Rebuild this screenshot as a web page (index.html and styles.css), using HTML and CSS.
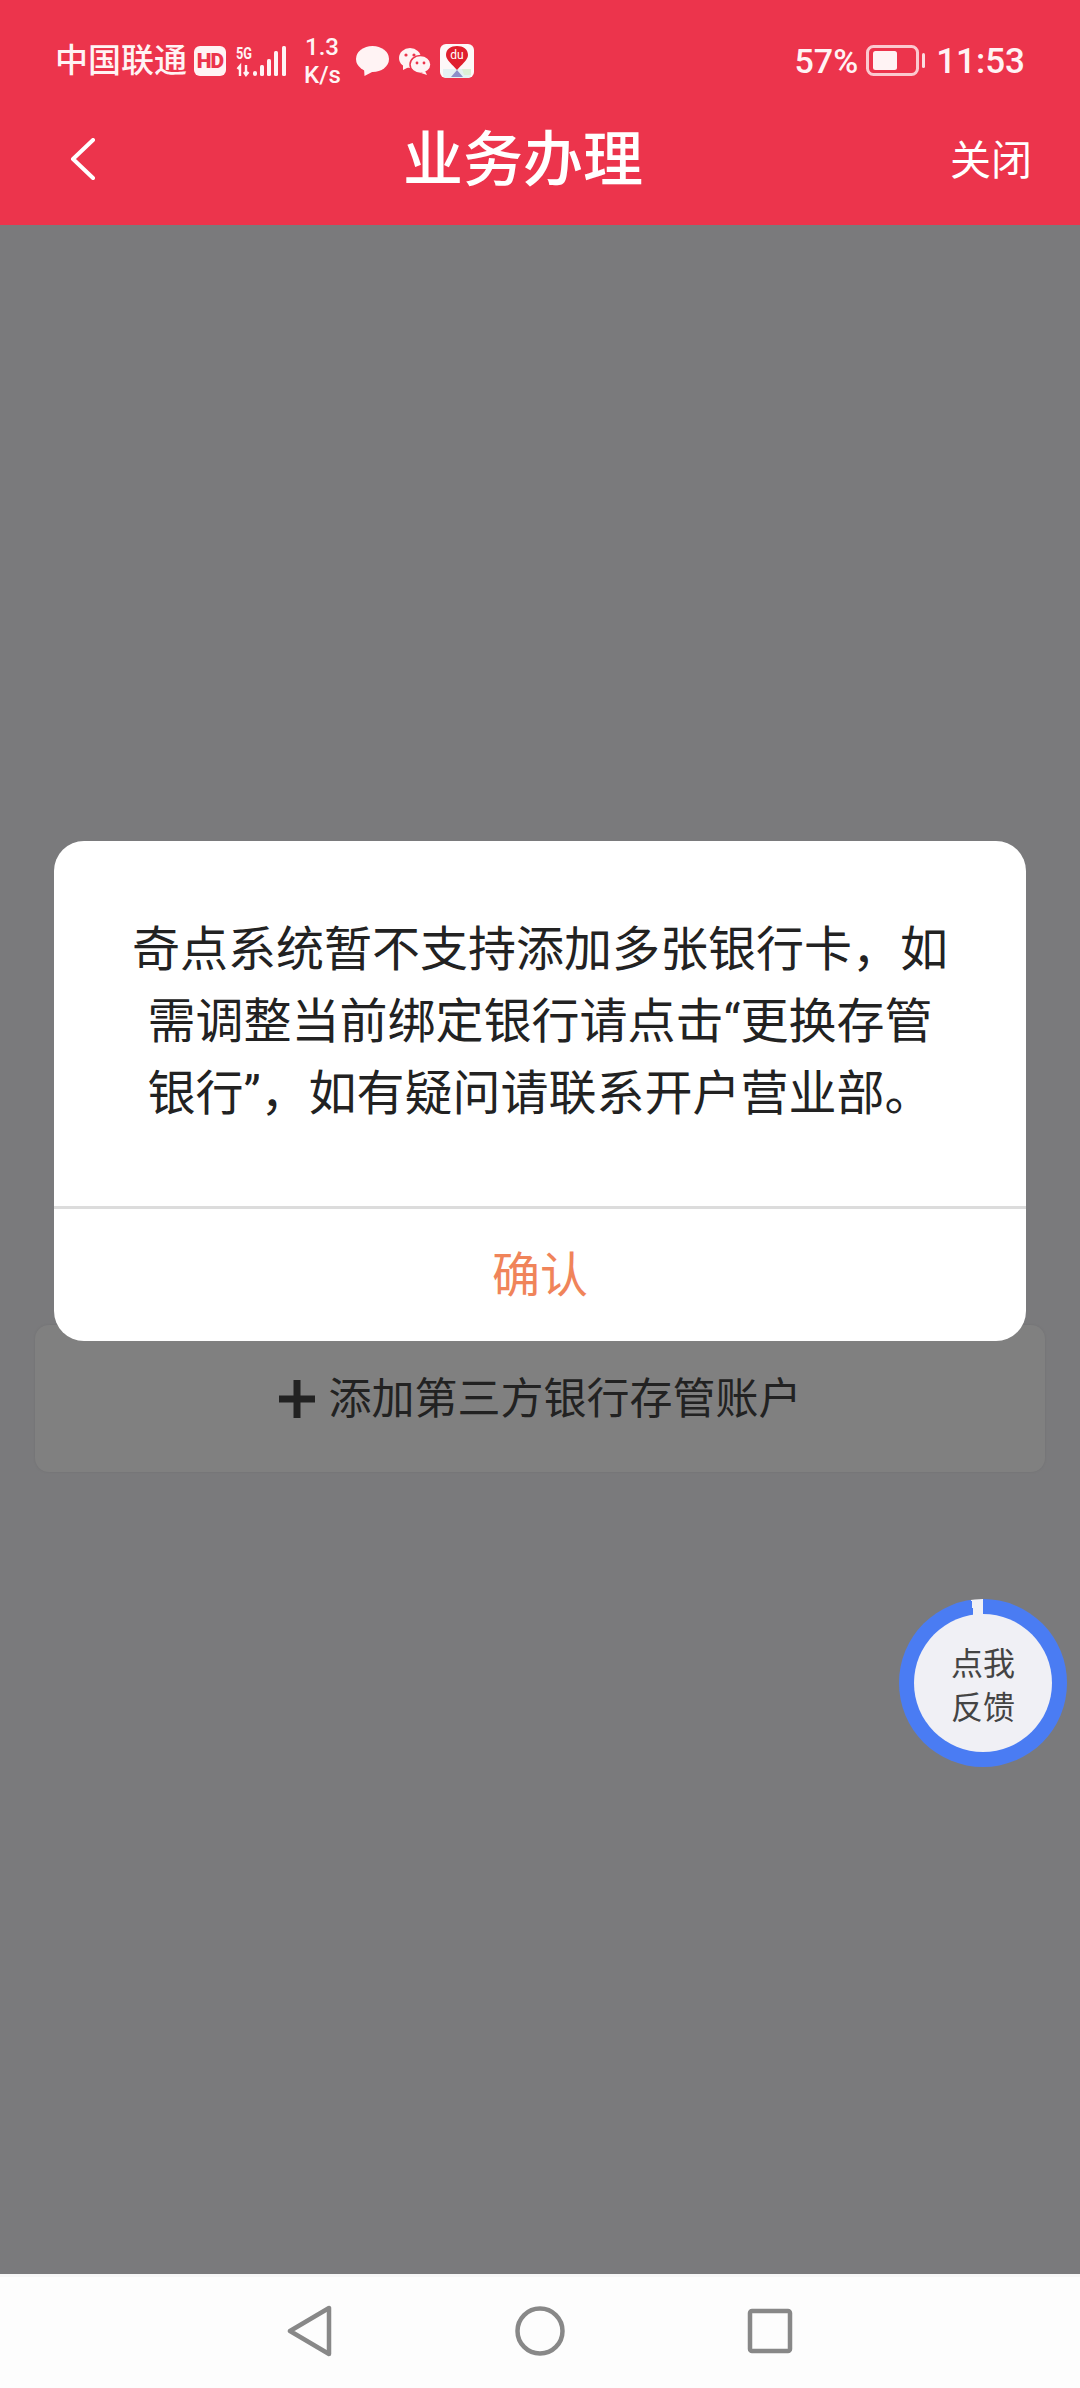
FILE: index.html
```html
<!DOCTYPE html>
<html lang="zh-CN">
<head>
    <meta charset="UTF-8">
    <meta name="viewport" content="width=device-width, initial-scale=1.0">
    <title>业务办理</title>
    <link rel="stylesheet" href="styles.css">
</head>
<body>
    <div class="page">
        <header class="top">
            <div class="status">
                <span class="carrier">中国联通</span>
                <span class="hd">HD</span>
                <svg class="signal" width="50" height="32" viewBox="0 0 50 32">
                    <text x="0" y="14" class="signal-5g" textLength="16" lengthAdjust="spacingAndGlyphs">5G</text>
                    <path d="M4 31V21M1.5 24L4 21L4 31M10 20V30M8 27L10 30L12.5 27" fill="none" stroke="#fff3f4" stroke-width="2.4"/>
                    <rect x="17" y="26" width="4" height="5" rx="2" fill="#fff3f4"/>
                    <rect x="24" y="20" width="4" height="11" rx="1.5" fill="#fff3f4"/>
                    <rect x="31" y="14" width="4" height="17" rx="1.5" fill="#fff3f4"/>
                    <rect x="38" y="6" width="4" height="25" rx="1.5" fill="#fff3f4"/>
                    <rect x="46" y="1" width="4" height="30" rx="1.5" fill="#fff3f4"/>
                </svg>
                <span class="speed">1.3<br>K/s</span>
                <svg class="bubble" width="33" height="30" viewBox="0 0 33 30">
                    <ellipse cx="16.500" cy="13" rx="16.500" ry="13" fill="#fff3f4"/>
                    <path d="M8 22L8.500 30L18 25Z" fill="#fff3f4"/>
                </svg>
                <svg class="wechat" width="32" height="27" viewBox="0 0 32 27">
                    <ellipse cx="11" cy="10" rx="11" ry="10" fill="#fff3f4"/>
                    <path d="M4 16L4 22L10 19Z" fill="#fff3f4"/>
                    <ellipse cx="21.500" cy="16.500" rx="10.500" ry="9" fill="#fff3f4" stroke="#ec344c" stroke-width="1.500"/>
                    <path d="M26 23L28 27L22 25Z" fill="#fff3f4"/>
                    <circle cx="7" cy="7" r="1.600" fill="#ec344c"/>
                    <circle cx="15" cy="7" r="1.600" fill="#ec344c"/>
                    <circle cx="18" cy="15" r="1.400" fill="#ec344c"/>
                    <circle cx="25" cy="15" r="1.400" fill="#ec344c"/>
                </svg>
                <svg class="app-icon" width="34" height="34" viewBox="0 0 34 34">
                    <rect width="34" height="34" rx="6" fill="#fdf8f8"/>
                    <path d="M3 25H31V30Q31 34 27 34H7Q3 34 3 30Z" fill="#e4f1f3"/>
                    <path d="M22 25H31V31H24Z" fill="#dcefd6"/>
                    <path d="M11 33L17 26L23 33Z" fill="#8d8fc9"/>
                    <path d="M17 26C13 21 6 16 6 11C6 5 11 2 17 2C23 2 28 5 28 11C28 16 21 21 17 26Z" fill="#e01f2d"/>
                    <text x="17" y="15" class="app-du" text-anchor="middle">du</text>
                </svg>
                <div class="status-right">
                    <span class="percent">57%</span>
                    <svg class="battery" width="60" height="32" viewBox="0 0 60 32">
                        <rect x="1.500" y="1.500" width="50" height="28" rx="6" fill="none" stroke="#fbc9cf" stroke-width="3"/>
                        <rect x="7" y="6" width="24" height="19" rx="2.500" fill="#fff3f4"/>
                        <rect x="56" y="8" width="3" height="15" rx="1.500" fill="#fbdde0"/>
                    </svg>
                    <span class="clock">11:53</span>
                </div>
            </div>
            <div class="titlebar">
                <svg class="back" width="26" height="42" viewBox="0 0 26 42">
                    <path d="M23 2L3 21L23 40" fill="none" stroke="#fff" stroke-width="4" stroke-linecap="round" stroke-linejoin="round"/>
                </svg>
                <h1 class="title">业务办理</h1>
                <span class="close">关闭</span>
            </div>
        </header>

        <main class="content">
            <div class="add-card">
                <svg class="plus" width="36" height="38" viewBox="0 0 36 38">
                    <path d="M0 19H36M18 0V38" fill="none" stroke="#222" stroke-width="7"/>
                </svg>
                <span class="add-text">添加第三方银行存管账户</span>
            </div>

            <div class="dialog">
                <div class="dialog-body">奇点系统暂不支持添加多张银行卡，如需调整当前绑定银行请点击“更换存管银行”，如有疑问请联系开户营业部。</div>
                <div class="dialog-btn">确认</div>
            </div>

            <div class="feedback">
                <div class="feedback-inner">点我<br>反馈</div>
            </div>
        </main>

        <nav class="navbar">
            <div class="nav-cell">
                <svg width="46" height="52" viewBox="0 0 46 52">
                    <path d="M3 26L42 3V49Z" fill="none" stroke="#888" stroke-width="4.500" stroke-linejoin="round"/>
                </svg>
            </div>
            <div class="nav-cell">
                <svg width="50" height="50" viewBox="0 0 50 50">
                    <circle cx="25" cy="25" r="22.500" fill="none" stroke="#888" stroke-width="4.500"/>
                </svg>
            </div>
            <div class="nav-cell">
                <svg width="46" height="46" viewBox="0 0 46 46">
                    <rect x="3" y="3" width="40" height="40" rx="2" fill="none" stroke="#888" stroke-width="4.500"/>
                </svg>
            </div>
        </nav>
    </div>
</body>
</html>
```

FILE: styles.css
```css
* {
    margin: 0;
    padding: 0;
    box-sizing: border-box;
}

body {
    width: 1080px;
    height: 2388px;
    overflow: hidden;
    font-family: Roboto, "Noto Sans CJK SC", sans-serif;
    background-color: #7a7a7c;
}

.page {
    display: flex;
    flex-direction: column;
    height: 100%;
}

/* Red header */
.top {
    height: 225px;
    background-color: #ec344c;
    color: #fff;
}

.status {
    display: flex;
    align-items: center;
    height: 96px;
    padding: 26px 55px 0 55px;
    color: #fff3f4;
}

.carrier {
    font-size: 33px;
    font-weight: 500;
    line-height: 40px;
    white-space: nowrap;
}

.hd {
    flex: none;
    width: 32px;
    height: 30px;
    margin-left: 7px;
    border-radius: 6px;
    background-color: #fff3f4;
    color: #ec344c;
    font-size: 21px;
    font-weight: 900;
    letter-spacing: -1px;
    line-height: 30px;
    text-align: center;
}

.signal {
    margin-left: 10px;
    overflow: visible;
}

.signal-5g {
    font-size: 17px;
    font-weight: 700;
    fill: #fff3f4;
}

.speed {
    margin-left: 18px;
    width: 36px;
    font-size: 24px;
    font-weight: 500;
    line-height: 28px;
    text-align: center;
}

.bubble {
    margin-left: 16px;
}

.wechat {
    margin-left: 10px;
}

.app-icon {
    margin-left: 9px;
}

.app-du {
    font-size: 12px;
    fill: #fff;
}

.status-right {
    display: flex;
    align-items: center;
    margin-left: auto;
    font-size: 34px;
    font-weight: 500;
}

.battery {
    margin-left: 8px;
}

.clock {
    margin-left: 10px;
    font-size: 35px;
}

.titlebar {
    display: flex;
    align-items: center;
    justify-content: space-between;
    height: 129px;
    padding: 0 48px 0 70px;
}

.back {
    margin-top: -4px;
}

.title {
    font-size: 60px;
    font-weight: 500;
    line-height: 70px;
}

.close {
    font-size: 41px;
    line-height: 50px;
}

/* Dimmed content */
.content {
    position: relative;
    flex: 1;
    padding: 1100px 35px 0;
}

.add-card {
    display: flex;
    align-items: center;
    justify-content: center;
    gap: 14px;
    height: 147px;
    border-radius: 14px;
    background-color: #808080;
    box-shadow: 0 0 3px rgba(0, 0, 0, 0.08);
    color: #222;
    font-size: 43px;
}

.add-text {
    padding-bottom: 8px;
}

.dialog {
    position: absolute;
    top: 616px;
    left: 54px;
    display: flex;
    flex-direction: column;
    width: 972px;
    height: 500px;
    border-radius: 30px;
    background-color: #fff;
}

.dialog-body {
    display: flex;
    align-items: center;
    flex: 1;
    padding: 0 73px 4px;
    border-bottom: 3px solid #dcdcdc;
    color: #222;
    font-size: 48px;
    line-height: 72px;
    text-align: center;
}

.dialog-btn {
    height: 132px;
    color: #f0845a;
    font-size: 48px;
    line-height: 134px;
    text-align: center;
}

.feedback {
    position: absolute;
    top: 1374px;
    left: 899px;
    display: flex;
    align-items: center;
    justify-content: center;
    width: 168px;
    height: 168px;
    border-radius: 50%;
    background: conic-gradient(#4a7cf3 0 352deg, #f0f0f5 352deg);
}

.feedback-inner {
    display: flex;
    align-items: center;
    justify-content: center;
    width: 138px;
    height: 138px;
    padding-top: 5px;
    border-radius: 50%;
    background-color: #f0f0f5;
    color: #444;
    font-size: 32px;
    line-height: 44px;
    text-align: center;
}

/* Android nav */
.navbar {
    display: flex;
    align-items: center;
    justify-content: center;
    height: 114px;
    padding-bottom: 3px;
    border-top: 3px solid #f7f7f7;
    background-color: #fdfdfd;
}

.nav-cell {
    display: flex;
    justify-content: center;
    width: 230px;
}
```
